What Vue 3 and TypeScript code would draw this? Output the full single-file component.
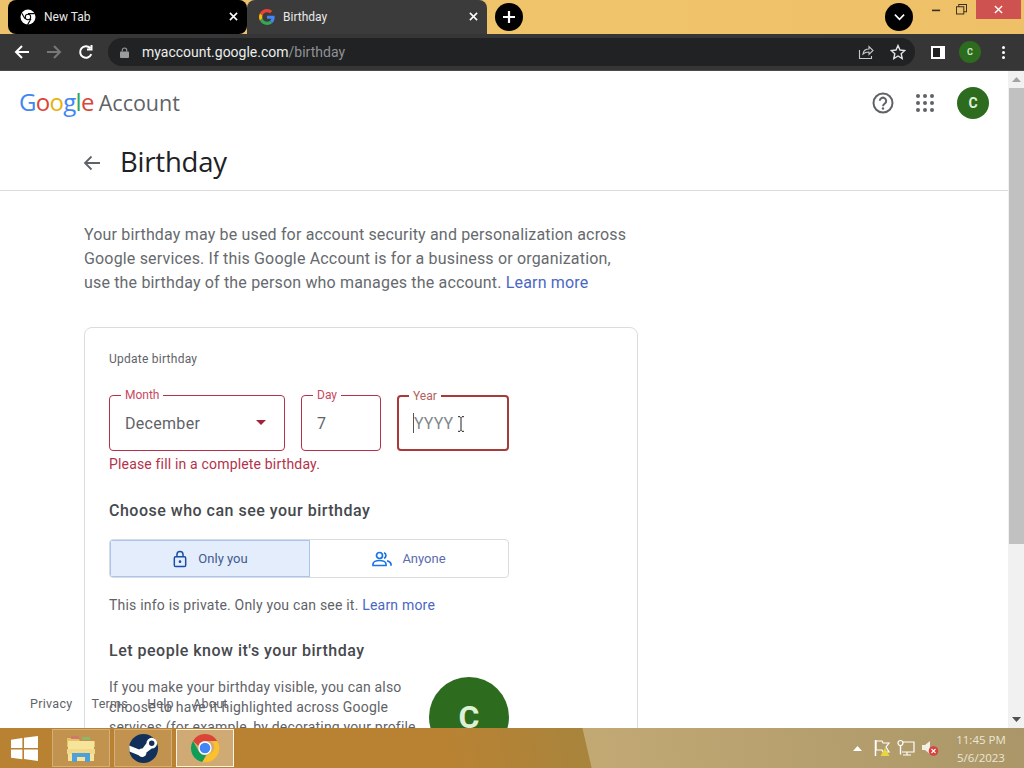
<script setup lang="ts">
const tabs = [
  { id: 'new', title: 'New Tab' },
  { id: 'bd', title: 'Birthday' },
]
const lines = [
  'If you make your birthday visible, you can also',
  'choose to have it highlighted across Google',
  'services (for example, by decorating your profile',
]
const footer = ['Privacy', 'Terms', 'Help', 'About']
</script>

<template>
  <div class="screen">
    <header class="titlebar">
      <div v-for="t in tabs" :key="t.id" class="tab" :class="t.id">
        <svg v-if="t.id === 'new'" class="fav" viewBox="0 0 16 16">
          <circle cx="8" cy="8" r="7.5" fill="#fff" />
          <circle cx="8" cy="8" r="3.2" fill="#000" />
          <circle cx="8" cy="8" r="2.2" fill="#fff" />
          <path d="M8 4.6h6.8M5 9.8 1.8 4.2M11 9.8l-3.5 6" stroke="#000" stroke-width="1.1" />
        </svg>
        <svg v-else class="fav" viewBox="0 0 48 48">
          <path fill="#ea4335" d="M24 9.5c3.5 0 6.700 1.300 9.100 3.500l6.800-6.800C35.800 2.400 30.300 0 24 0 14.600 0 6.500 5.400 2.600 13.200l7.900 6.100C12.400 13.700 17.700 9.500 24 9.500z" />
          <path fill="#4285f4" d="M47 24.500c0-1.600-.2-3.100-.4-4.500H24v9h12.900c-.6 3-2.200 5.400-4.700 7.100l7.700 6c4.500-4.200 7.100-10.300 7.100-17.600z" />
          <path fill="#fbbc05" d="M10.500 28.700c-.5-1.500-.8-3-.8-4.700s.3-3.200.8-4.700l-7.900-6.100C.9 16.500 0 20.100 0 24s.9 7.500 2.600 10.800z" />
          <path fill="#34a853" d="M24 48c6.500 0 11.900-2.100 15.900-5.900l-7.700-6c-2.100 1.400-4.900 2.300-8.200 2.300-6.300 0-11.600-4.200-13.500-9.800l-7.900 6.100C6.500 42.600 14.600 48 24 48z" />
        </svg>
        <span class="tab-title">{{ t.title }}</span>
        <svg class="tab-x" viewBox="0 0 10 10"><path d="M1 1l8 8M9 1 1 9" stroke="#fff" stroke-width="1.700" /></svg>
      </div>
      <div class="round-btn plus">
        <svg viewBox="0 0 14 14" width="14" height="14"><path d="M7 1v12M1 7h12" stroke="#fff" stroke-width="2.200" /></svg>
      </div>
      <div class="title-spacer"></div>
      <div class="round-btn chev">
        <svg viewBox="0 0 12 8" width="11" height="8"><path d="M1 1.500l5 5 5-5" fill="none" stroke="#fff" stroke-width="1.800" /></svg>
      </div>
      <div class="win-btn">
        <svg viewBox="0 0 10 10" width="9" height="9"><path d="M0 6h9" stroke="#3a3020" stroke-width="1.800" /></svg>
      </div>
      <div class="win-btn">
        <svg viewBox="0 0 12 12" width="11" height="11"><path d="M.5 3h8v8h-8zM3 3V.5h8.500v8H8.500" fill="none" stroke="#3a3020" stroke-width="1.100" /></svg>
      </div>
      <div class="win-close">
        <svg viewBox="0 0 10 10" width="9" height="9"><path d="M1 1l8 8M9 1 1 9" stroke="#fff" stroke-width="1.500" /></svg>
      </div>
    </header>

    <nav class="toolbar">
      <svg class="nav-ic" viewBox="0 0 16 16"><path d="M15 8H2M8 2 2 8l6 6" fill="none" stroke="#fff" stroke-width="2" /></svg>
      <svg class="nav-ic" viewBox="0 0 16 16"><path d="M1 8h13M8 2l6 6-6 6" fill="none" stroke="#77787a" stroke-width="2" /></svg>
      <svg class="nav-ic" viewBox="0 0 16 16"><path d="M13.300 10.200A5.800 5.800 0 1 1 12.200 4M13.500 1v4.500H9" fill="none" stroke="#fff" stroke-width="2" /></svg>
      <div class="omnibox">
        <svg class="lock-small" viewBox="0 0 10 12"><path d="M2.500 5V3.500a2.500 2.500 0 0 1 5 0V5" fill="none" stroke="#9a9b9d" stroke-width="1.200" /><rect y="5" width="10" height="7" rx="1" fill="#9a9b9d" /></svg>
        <span class="url"><span class="url-host">myaccount.google.com</span><span class="url-path">/birthday</span></span>
        <span class="omni-spacer"></span>
        <svg class="omni-ic" viewBox="0 0 16 16"><path d="M1.500 6v8.500h12V12M5 10c.5-3.500 3-5 6-5V2.500L15 6.500l-4 4V8c-2.500 0-4.500.5-6 2z" fill="none" stroke="#c8c9cb" stroke-width="1.100" /></svg>
        <svg class="omni-ic" viewBox="0 0 16 16"><path d="m8 1.500 2 4.500 4.800.5-3.600 3.200 1 4.800L8 12l-4.200 2.500 1-4.800L1.200 6.500 6 6z" fill="none" stroke="#e4e5e6" stroke-width="1.400" /></svg>
      </div>
      <div class="side-ic"><span></span></div>
      <div class="mini-avatar">C</div>
      <div class="dots"><i></i><i></i><i></i></div>
    </nav>

    <main class="viewport">
      <div class="page">
        <div class="topbar">
          <div class="logo">
            <span class="g-word"><b class="b">G</b><b class="r">o</b><b class="y">o</b><b class="b">g</b><b class="gr">l</b><b class="r">e</b></span>
            <span class="acct">Account</span>
          </div>
          <svg class="help" viewBox="0 0 24 24">
            <circle cx="12" cy="12" r="9.500" fill="none" stroke="#5f6368" stroke-width="2" />
            <path d="M8.800 9.800a3.200 3.200 0 1 1 5 2.700c-1.100.8-1.800 1.300-1.800 2.700" fill="none" stroke="#5f6368" stroke-width="2" />
            <circle cx="12" cy="17.500" r="1.200" fill="#5f6368" />
          </svg>
          <div class="apps"><i v-for="n in 9" :key="n"></i></div>
          <div class="avatar">C</div>
        </div>
        <div class="title-row">
          <svg class="back" viewBox="0 0 18 16"><path d="M17 8H2M8.500 1.500 2 8l6.500 6.500" fill="none" stroke="#5f6368" stroke-width="1.800" /></svg>
          <h1>Birthday</h1>
        </div>
        <p class="intro">Your birthday may be used for account security and personalization across<br />Google services. If this Google Account is for a business or organization,<br />use the birthday of the person who manages the account. <a>Learn more</a></p>

        <section class="card">
          <div class="card-label">Update birthday</div>
          <div class="fields">
            <div class="field month">
              <span class="legend">Month</span>
              <span class="value">December</span>
              <span class="caret"></span>
            </div>
            <div class="field day">
              <span class="legend">Day</span>
              <span class="value">7</span>
            </div>
            <div class="field year">
              <span class="legend">Year</span>
              <span class="cursor"></span>
              <span class="placeholder">YYYY</span>
              <svg class="ibeam" viewBox="0 0 8 16"><path d="M1 .7h2l1 1 1-1h2M4 1.700v12.600M1 15.300h2l1-1 1 1h2" fill="none" stroke="#222" stroke-width="1" /></svg>
            </div>
          </div>
          <div class="error">Please fill in a complete birthday.</div>

          <h2>Choose who can see your birthday</h2>
          <div class="toggle">
            <div class="opt active">
              <svg class="opt-ic" viewBox="0 0 16 20"><path d="M4.500 7.500V5a3.500 3.500 0 0 1 7 0v2.500" fill="none" stroke="#174ea6" stroke-width="1.700" /><rect x="1.500" y="7.500" width="13" height="11" rx="1.500" fill="none" stroke="#174ea6" stroke-width="1.700" /><circle cx="8" cy="13" r="1.500" fill="#174ea6" /></svg>
              <span>Only you</span>
            </div>
            <div class="opt">
              <svg class="opt-ic wide" viewBox="0 0 20 16"><circle cx="7.500" cy="4.500" r="3" fill="none" stroke="#1a73e8" stroke-width="1.700" /><path d="M1 14.500V13c0-2 3-3.500 6.500-3.500S14 11 14 13v1.500z" fill="none" stroke="#1a73e8" stroke-width="1.700" /><path d="M12 1.700a3 3 0 0 1 0 5.600M15 9.700c2.300.7 4 1.800 4 3.500v1.500" fill="none" stroke="#1a73e8" stroke-width="1.700" /></svg>
              <span>Anyone</span>
            </div>
          </div>
          <p class="private">This info is private. Only you can see it. <a>Learn more</a></p>

          <h2 class="know">Let people know it's your birthday</h2>
          <div class="know-row">
            <div class="know-text">
              <div v-for="l in lines" :key="l">{{ l }}</div>
            </div>
            <div class="big-avatar">C</div>
          </div>
        </section>

        <footer class="foot">
          <span v-for="f in footer" :key="f">{{ f }}</span>
        </footer>
      </div>
      <aside class="scrollbar">
        <svg viewBox="0 0 9 5" width="9" height="5"><path d="M4.500 0 9 5H0z" fill="#a3a3a3" /></svg>
        <div class="thumb"></div>
        <div class="track"></div>
        <svg viewBox="0 0 9 5" width="9" height="5"><path d="M0 0h9L4.500 5z" fill="#505050" /></svg>
      </aside>
    </main>

    <div class="taskbar">
      <svg class="start" viewBox="0 0 28 26"><path d="M0 3.800 11.800 2v10.500H0zM13.500 1.800 28 0v12.500H13.500zM0 14h11.800v10.300L0 22.500zM13.500 14H28v12l-14.500-2z" fill="#fff" /></svg>
      <div class="task-btn">
        <svg viewBox="0 0 32 30" width="32" height="30">
          <path d="M2 5h11l2 3h15v6H2z" fill="#e2c466" />
          <path d="M3 8h26v20H3z" fill="#f6e49a" />
          <path d="M6 3h8v3H6z" fill="#d2786a" />
          <path d="M17 4h8v3h-8z" fill="#8fb56a" />
          <path d="M2 16h28v5H2z" fill="#f1d98a" />
          <path d="M7 29V20h18v9h-5v-5h-8v5z" fill="#4f9fd8" />
        </svg>
      </div>
      <div class="task-btn">
        <svg viewBox="0 0 32 32" width="31" height="31">
          <circle cx="16" cy="16" r="15" fill="#12305a" />
          <path d="M1.500 19 11 23a4.500 4.500 0 0 0 8-3l5.500-4a5.500 5.500 0 1 0-5.500-5.500L15 16a4.500 4.500 0 0 0-3.500 1L1.200 13z" fill="#fff" />
          <circle cx="24.500" cy="10.500" r="2.800" fill="#12305a" />
        </svg>
      </div>
      <div class="task-btn active">
        <svg viewBox="0 0 48 48" width="32" height="32">
          <path d="M24 3a21 21 0 0 1 18.200 10.500H24a10.500 10.500 0 0 0-10 7.300L6 13.500A21 21 0 0 1 24 3z" fill="#db4437" />
          <path d="M6 13.500 14.700 28.700a10.500 10.500 0 0 0 10.800 5.700L20 45A21 21 0 0 1 6 13.500z" fill="#0f9d58" />
          <path d="M42.200 13.500A21 21 0 0 1 20 45l9-12a10.500 10.500 0 0 0 3.500-19.500z" fill="#fbc02d" />
          <circle cx="24" cy="24" r="10" fill="#fff" />
          <circle cx="24" cy="24" r="8" fill="#4285f4" />
        </svg>
      </div>
      <div class="task-spacer"></div>
      <svg class="tray-up" viewBox="0 0 9 5"><path d="M4.500 0 9 5H0z" fill="#fff" /></svg>
      <svg class="tray" viewBox="0 0 18 18">
        <path d="M2.500 1v16" stroke="#fff" stroke-width="1.500" />
        <path d="M3 2h6l1 2h6l-3 4 3 5H10l-1-2H3z" fill="none" stroke="#fff" stroke-width="1.200" />
        <path d="m12 9 4.500 8h-9z" fill="#e8d73c" />
      </svg>
      <svg class="tray" viewBox="0 0 18 18">
        <path d="M5 3h12v10H5M10 13v3M6 16h8" fill="none" stroke="#fff" stroke-width="1.200" />
        <circle cx="3.500" cy="4" r="2.500" fill="none" stroke="#fff" stroke-width="1.200" />
        <path d="M3.500 6.500v9" stroke="#fff" stroke-width="1.400" />
      </svg>
      <svg class="tray" viewBox="0 0 18 18">
        <path d="M1 6h3l5-4v13l-5-4H1z" fill="#f2eee4" />
        <circle cx="12.500" cy="12" r="4.800" fill="#d8413f" />
        <path d="m10.500 10 4 4m0-4-4 4" stroke="#fff" stroke-width="1.100" />
      </svg>
      <div class="clock"><div>11:45 PM</div><div>5/6/2023</div></div>
    </div>
  </div>
</template>

<style>
html, body { margin: 0; background: #fff; overflow: hidden; }
</style>

<style scoped>
.screen { width: 1024px; height: 768px; display: flex; flex-direction: column; overflow: hidden; font-family: Roboto, "Liberation Sans", sans-serif; color: #5f6368; }
.titlebar { height: 34px; flex: none; display: flex; align-items: center; padding: 0 0 0 8px; background: linear-gradient(90deg, #ecc26c, #f0c46a 60%, #eec068); }
.tab { width: 239px; height: 34px; box-sizing: border-box; display: flex; align-items: center; padding: 0 9px 1px 12px; border-radius: 8px 8px 0 0; color: #e8e8e8; font-size: 12px; }
.tab.new { background: #000; border-radius: 8px; }
.tab.bd { background: #3b3b3c; width: 240px; height: 38px; align-self: flex-start; padding-bottom: 5px; padding-left: 12px; }
.fav { width: 16px; height: 16px; flex: none; margin-right: 8px; }
.tab-title { flex: 1; }
.tab-x { width: 9px; height: 9px; }
.round-btn { width: 28px; height: 28px; border-radius: 50%; background: #000; display: flex; align-items: center; justify-content: center; flex: none; }
.plus { margin-left: 8px; }
.title-spacer { flex: 1; }
.chev { margin-right: 11px; }
.win-btn { width: 25px; height: 19px; display: flex; align-items: center; justify-content: center; align-self: flex-start; flex: none; }
.win-close { width: 45px; height: 19px; background: #cd5250; display: flex; align-items: center; justify-content: center; align-self: flex-start; margin: 0 3px 0 2px; flex: none; }
.toolbar { height: 37px; flex: none; box-sizing: border-box; display: flex; align-items: center; background: #363637; border-bottom: 1px solid #4a4a4a; z-index: 1; }
.nav-ic { width: 16px; height: 16px; margin-left: 14px; margin-right: 2px; flex: none; }
.omnibox { width: 807px; height: 28px; margin-left: 12px; background: #212224; border-radius: 14px; display: flex; align-items: center; padding: 0 9px 0 12px; box-sizing: border-box; flex: none; }
.lock-small { width: 9px; height: 11px; margin-right: 13px; }
.url { font-size: 14px; }
.url-host { color: #eceded; }
.url-path { color: #8f9194; }
.omni-spacer { flex: 1; }
.omni-ic { width: 16px; height: 16px; margin-left: 16px; }
.side-ic { width: 14px; height: 13px; border: 2px solid #fff; box-sizing: border-box; margin-left: 16px; background: #fff; flex: none; display: flex; }
.side-ic span { width: 7px; background: #212224; }
.mini-avatar { width: 22px; height: 22px; border-radius: 50%; background: #2d6b1f; color: #cfe8c2; font-size: 9px; font-weight: 700; display: flex; align-items: center; justify-content: center; margin-left: 14px; flex: none; }
.dots { display: flex; flex-direction: column; gap: 2px; margin-left: 21px; flex: none; }
.dots i { width: 3px; height: 3px; border-radius: 50%; background: #fff; }
.viewport { flex: 1; min-height: 0; display: flex; background: #fff; }
.page { width: 1008px; flex: none; position: relative; overflow: hidden; }
.topbar { height: 64px; display: flex; align-items: center; padding: 0 19px 4px 19px; box-sizing: border-box; }
.avatar, .apps, .help { position: relative; top: 2px; }
.logo { flex: 1; display: flex; align-items: baseline; font-family: "Open Sans", Roboto, sans-serif; }
.g-word { font-size: 24px; letter-spacing: -.7px; margin-right: 5px; }
.g-word b { font-weight: 400; }
.b { color: #4285f4; } .r { color: #db4437; } .y { color: #e8b30a; } .gr { color: #34a853; }
.acct { font-size: 21.500px; color: #5f6368; }
.help { width: 24px; height: 24px; margin-right: 21px; }
.apps { width: 18px; display: grid; grid-template-columns: repeat(3, 4px); gap: 3px; margin-right: 23px; }
.apps i { width: 4px; height: 4px; border-radius: 50%; background: #5f6368; }
.avatar { width: 32px; height: 32px; border-radius: 50%; background: #2d6b1f; color: #dff0d5; font-size: 14px; font-weight: 700; display: flex; align-items: center; justify-content: center; }
.title-row { height: 55px; display: flex; align-items: center; padding-left: 83px; border-bottom: 1px solid #dadce0; }
.back { width: 18px; height: 16px; margin-right: 19px; }
h1 { margin: 0 0 2px; font-size: 27.500px; font-weight: 400; color: #202124; font-family: "Open Sans", Roboto, sans-serif; letter-spacing: -.2px; }
.intro { margin: 32px 0 0 84px; font-size: 16px; line-height: 24px; letter-spacing: .17px; color: #666a6e; }
a { color: #4a67c4; }
.card { width: 554px; box-sizing: border-box; margin: 32px 0 0 84px; border: 1px solid #dadce0; border-radius: 8px; padding: 24px; height: 600px; }
.card-label { font-size: 12px; line-height: 14px; color: #5f6368; letter-spacing: .25px; }
.fields { display: flex; gap: 16px; margin-top: 29px; }
.field { position: relative; height: 56px; box-sizing: border-box; border: 1px solid #b3324a; border-radius: 4px; display: flex; align-items: center; padding-left: 15px; font-size: 16px; color: #5f6368; }
.month { width: 176px; }
.day { width: 80px; }
.year { width: 112px; border: 2px solid #a83a3a; padding-left: 14px; }
.legend { position: absolute; top: -8px; left: 11px; background: #fff; padding: 0 4px; font-size: 12px; line-height: 14px; color: #c9485f; }
.year .legend { left: 10px; color: #b5605c; }
.value { letter-spacing: .3px; }
.caret { position: absolute; right: 18px; top: 24px; width: 0; height: 0; border-left: 5px solid transparent; border-right: 5px solid transparent; border-top: 5px solid #a5233a; }
.cursor { width: 1px; height: 20px; background: #555; }
.placeholder { color: #80868b; letter-spacing: .1px; }
.ibeam { position: absolute; left: 58px; top: 19px; width: 8px; height: 16px; }
.error { margin-top: 4px; font-size: 14px; line-height: 18px; color: #b3324a; letter-spacing: .17px; }
h2 { margin: 0; font-size: 16px; line-height: 22px; font-weight: 500; color: #46494d; letter-spacing: .5px; }
.card h2:not(.know) { margin-top: 27px; }
.toggle { display: flex; width: 400px; height: 39px; margin-top: 17px; box-sizing: border-box; border: 1px solid #dadce0; border-radius: 4px; overflow: hidden; }
.opt { width: 199px; display: flex; align-items: center; justify-content: center; gap: 10px; font-size: 13px; color: #5c6bb0; }
.opt + .opt { flex: 1; }
.opt.active { width: 200px; background: #e4edfb; color: #3f5a90; box-sizing: border-box; border-right: 1px solid #a9c4ee; box-shadow: inset 1px 1px 0 #a9c4ee, inset 0 -1px 0 #a9c4ee; gap: 11px; padding-left: 2px; }
.opt-ic { width: 14px; height: 18px; }
.opt-ic.wide { width: 20px; height: 16px; }
.private { margin: 17px 0 0; font-size: 14px; line-height: 20px; letter-spacing: .2px; color: #5f6368; }
.know { margin-top: 25px; }
.know-row { display: flex; margin-top: 15px; justify-content: space-between; width: 400px; }
.know-text { font-size: 14px; line-height: 20px; width: 320px; white-space: nowrap; letter-spacing: .18px; color: #5f6368; }
.big-avatar { width: 80px; height: 80px; border-radius: 50%; background: #2d6b1f; color: #dff0d5; font-size: 32px; font-weight: 700; display: flex; align-items: center; justify-content: center; flex: none; }
.foot { position: absolute; left: 30px; bottom: 16px; display: flex; gap: 19px; font-size: 12.500px; line-height: 16px; letter-spacing: .3px; color: #5f6368; }
.scrollbar { width: 16px; flex: none; background: #f1f1f1; display: flex; flex-direction: column; align-items: center; padding: 6px 0; box-sizing: border-box; }
.thumb { width: 15px; height: 456px; background: #c1c1c1; margin-top: 6px; flex: none; }
.track { flex: 1; }
.taskbar { height: 40px; flex: none; display: flex; align-items: center; background: linear-gradient(77deg, #b98233 0, #b98233 440px, #a8843c 576px, #c2a974 577px, #aa9668 100%); }
.start { width: 27px; height: 25px; margin-left: 11px; margin-right: 14px; flex: none; }
.task-btn { width: 58px; height: 38px; box-sizing: border-box; border: 1px solid rgba(255,255,255,.25); background: rgba(255,255,255,.14); display: flex; align-items: center; justify-content: center; margin-right: 4px; flex: none; }
.task-btn.active { background: rgba(255,255,255,.32); border-color: rgba(255,255,255,.85); }
.task-spacer { flex: 1; }
.tray-up { width: 9px; height: 5px; margin-right: 11px; }
.tray { width: 18px; height: 18px; margin-right: 6px; }
.clock { width: 60px; margin: 0 13px 0 6px; padding-top: 1px; font-family: "Open Sans", Roboto, sans-serif; font-size: 11.500px; line-height: 18px; color: #ece6d4; text-align: center; }
</style>
